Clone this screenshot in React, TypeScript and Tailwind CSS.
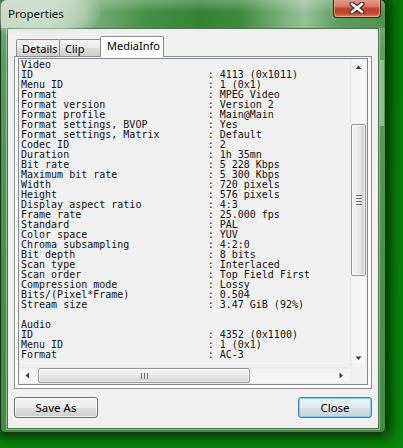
import React from "react";

type Line = { label: string; value?: string } | null;

const lines: Line[] = [
  { label: "Video" },
  { label: "ID", value: "4113 (0x1011)" },
  { label: "Menu ID", value: "1 (0x1)" },
  { label: "Format", value: "MPEG Video" },
  { label: "Format version", value: "Version 2" },
  { label: "Format profile", value: "Main@Main" },
  { label: "Format settings, BVOP", value: "Yes" },
  { label: "Format settings, Matrix", value: "Default" },
  { label: "Codec ID", value: "2" },
  { label: "Duration", value: "1h 35mn" },
  { label: "Bit rate", value: "5 228 Kbps" },
  { label: "Maximum bit rate", value: "5 300 Kbps" },
  { label: "Width", value: "720 pixels" },
  { label: "Height", value: "576 pixels" },
  { label: "Display aspect ratio", value: "4:3" },
  { label: "Frame rate", value: "25.000 fps" },
  { label: "Standard", value: "PAL" },
  { label: "Color space", value: "YUV" },
  { label: "Chroma subsampling", value: "4:2:0" },
  { label: "Bit depth", value: "8 bits" },
  { label: "Scan type", value: "Interlaced" },
  { label: "Scan order", value: "Top Field First" },
  { label: "Compression mode", value: "Lossy" },
  { label: "Bits/(Pixel*Frame)", value: "0.504" },
  { label: "Stream size", value: "3.47 GiB (92%)" },
  null,
  { label: "Audio" },
  { label: "ID", value: "4352 (0x1100)" },
  { label: "Menu ID", value: "1 (0x1)" },
  { label: "Format", value: "AC-3" },
];

function fmt(l: Line) {
  if (!l) return " ";
  if (l.value === undefined) return l.label;
  return l.label.padEnd(31, " ") + ": " + l.value;
}

function Arrow({ dir }: { dir: "up" | "down" | "left" | "right" }) {
  const pts =
    dir === "up"
      ? "0.5,4 3.5,0.5 6.5,4"
      : dir === "down"
      ? "0.5,0.5 3.5,4 6.5,0.5"
      : dir === "left"
      ? "4,0.5 0.5,3.5 4,6.5"
      : "0.5,0.5 4,3.5 0.5,6.5";
  const w = dir === "up" || dir === "down" ? 7 : 5;
  const h = dir === "up" || dir === "down" ? 5 : 7;
  return (
    <svg width={w} height={h} viewBox={`0 0 ${w} ${h}`}>
      <polygon points={pts} fill="#3d3d3d" />
    </svg>
  );
}

export default function App() {
  return (
    <div className="relative w-[403px] h-[448px] overflow-hidden bg-[linear-gradient(180deg,#087a08_0%,#0a850a_100%)]">
      {/* Window */}
      <div className="absolute left-0 top-[-1px] w-[386px] h-[434px] rounded-t-[7px] rounded-b-[5px] border border-[#173617] shadow-[0_0_12px_5px_rgba(0,20,0,0.7)] bg-[linear-gradient(180deg,#86b286_0%,#5d9d5d_12%,#4d944d_45%,#438c43_100%)] flex flex-col">
        {/* right frame streak */}
        <div className="absolute right-[1px] top-[60px] w-[5px] h-[66px] bg-[#9cc59c] opacity-80" />
        {/* Title bar */}
        <div className="relative h-[28px] shrink-0 rounded-t-[6px] bg-[linear-gradient(90deg,#b9ceb9_0%,#b0c9b0_13%,#79ab79_24%,#459045_38%,#348334_52%,#3d893d_62%,#7fb27f_74%,#98c098_79%,#5d9d5d_88%,#4d944d_100%)]">
          <div className="absolute inset-x-0 top-0 h-[12px] rounded-t-[6px] bg-[linear-gradient(180deg,rgba(255,255,255,0.25),rgba(255,255,255,0))]" />
          <div className="absolute left-[-20px] top-[-12px] w-[120px] h-[50px] rounded-full bg-[radial-gradient(ellipse_at_center,rgba(215,228,215,0.85)_0%,rgba(215,228,215,0.5)_50%,rgba(215,228,215,0)_75%)]" />
          <div className="relative pl-[7px] pt-[6px] text-[11.5px] leading-[16px] text-[#111] font-['Noto_Sans',sans-serif]">
            Properties
          </div>
          {/* close button */}
          <div className="absolute left-[332px] top-[-1px] w-[48px] h-[19px] rounded-b-[4px] border border-t-0 border-[#4a1a10] bg-[linear-gradient(180deg,#e2a18e_0%,#d77a64_40%,#c0412a_55%,#c24a30_80%,#dc8a68_100%)] shadow-[inset_0_0_0_1px_rgba(255,220,200,0.45)] flex items-center justify-center">
            <svg width="16" height="12" viewBox="0 0 16 12">
              <path d="M3 2 L13 10 M13 2 L3 10" stroke="#4a2a22" strokeWidth="5" strokeLinecap="round" />
              <path d="M3 2 L13 10 M13 2 L3 10" stroke="#ffffff" strokeWidth="2.6" strokeLinecap="round" />
            </svg>
          </div>
        </div>

        {/* Client area */}
        <div className="mx-[6px] mb-[3px] flex-1 flex flex-col border border-[#4f6f4f] bg-[#f0f0f0] shadow-[0_0_0_1px_rgba(230,245,230,0.45)] font-['Noto_Sans',sans-serif] text-[11px] text-black">
          {/* Tabs */}
          <div className="mt-[7px] h-[20px] px-[6px] flex items-end">
            <div className="ml-[2px] flex items-end">
              <div className="w-[44px] h-[17px] border border-b-0 border-[#898c95] rounded-t-[2px] bg-[linear-gradient(180deg,#f3f3f3_0%,#ebebeb_50%,#dddddd_51%,#cfcfcf_100%)] pl-[5px] leading-[17px]">
                Details
              </div>
              <div className="-ml-px w-[42px] h-[17px] border border-b-0 border-[#898c95] rounded-t-[2px] bg-[linear-gradient(180deg,#f3f3f3_0%,#ebebeb_50%,#dddddd_51%,#cfcfcf_100%)] pl-[5px] leading-[17px]">
                Clip
              </div>
              <div className="relative z-10 -ml-px -mb-px w-[64px] h-[21px] border border-b-0 border-[#898c95] rounded-t-[2px] bg-[#fcfcfc] pl-[6px] leading-[18px]">
                MediaInfo
              </div>
            </div>
          </div>

          {/* Panel */}
          <div className="mx-[6px] h-[333px] border border-[#898c95] bg-[#fcfcfc] pt-[1px] px-[3px] pb-[3px] flex flex-col">
            {/* List box */}
            <div className="flex-1 border border-[#828790] bg-[#f0f0f0] grid grid-cols-[1fr_17px] grid-rows-[1fr_17px] overflow-hidden">
              <div className="overflow-hidden pt-[1px] pl-[2px] font-['DejaVu_Sans_Mono',monospace] text-[10px] leading-[10px] text-[#111] whitespace-pre">
                {lines.map((l, i) => (
                  <div key={i} className="h-[10px]">
                    {fmt(l)}
                  </div>
                ))}
              </div>
              {/* vertical scrollbar */}
              <div className="flex flex-col bg-[linear-gradient(90deg,#e6e6e6_0%,#f4f4f4_15%,#f6f6f6_85%,#ececec_100%)]">
                <div className="h-[17px] flex items-center justify-center">
                  <Arrow dir="up" />
                </div>
                <div className="flex-1 relative">
                  <div className="mt-[48px] mx-[1px] h-[152px] rounded-[2px] border border-[#959595] bg-[linear-gradient(90deg,#f3f3f3_0%,#ececec_40%,#dcdcdc_75%,#cfcfcf_100%)] shadow-[inset_0_0_0_1px_rgba(255,255,255,0.7)] flex flex-col items-center justify-center gap-[2px]">
                    <div className="w-[6px] h-px bg-[#6f6f6f]" />
                    <div className="w-[6px] h-px bg-[#6f6f6f]" />
                    <div className="w-[6px] h-px bg-[#6f6f6f]" />
                    <div className="w-[6px] h-px bg-[#6f6f6f]" />
                  </div>
                </div>
                <div className="h-[17px] flex items-center justify-center">
                  <Arrow dir="down" />
                </div>
              </div>
              {/* horizontal scrollbar */}
              <div className="flex bg-[linear-gradient(180deg,#e6e6e6_0%,#f4f4f4_15%,#f6f6f6_85%,#ececec_100%)]">
                <div className="w-[17px] flex items-center justify-center">
                  <Arrow dir="left" />
                </div>
                <div className="flex-1 flex">
                  <div className="ml-[2px] my-[1px] w-[212px] rounded-[2px] border border-[#959595] bg-[linear-gradient(180deg,#f3f3f3_0%,#ececec_40%,#dcdcdc_75%,#cfcfcf_100%)] shadow-[inset_0_0_0_1px_rgba(255,255,255,0.7)] flex items-center justify-center gap-[2px]">
                    <div className="w-px h-[6px] bg-[#6f6f6f]" />
                    <div className="w-px h-[6px] bg-[#6f6f6f]" />
                    <div className="w-px h-[6px] bg-[#6f6f6f]" />
                  </div>
                </div>
                <div className="w-[17px] flex items-center justify-center">
                  <Arrow dir="right" />
                </div>
              </div>
              <div className="bg-[#f0f0f0]" />
            </div>
          </div>

          {/* Buttons */}
          <div className="mt-[8px] px-[6px] flex justify-between">
            <button className="w-[84px] h-[21px] rounded-[3px] border border-[#707070] bg-[linear-gradient(180deg,#f2f2f2_0%,#ebebeb_50%,#dddddd_51%,#cfcfcf_100%)] shadow-[inset_0_0_0_1px_rgba(255,255,255,0.7)] text-[11.5px] leading-[19px] text-black">
              Save As
            </button>
            <button className="w-[74px] h-[21px] rounded-[3px] border border-[#3c7fb1] bg-[linear-gradient(180deg,#eef3f6_0%,#e6ebee_50%,#d8dfe3_51%,#cbd3d8_100%)] shadow-[inset_0_0_0_1px_rgba(96,204,242,0.8)] text-[11.5px] leading-[19px] text-black">
              Close
            </button>
          </div>
        </div>
      </div>
    </div>
  );
}
